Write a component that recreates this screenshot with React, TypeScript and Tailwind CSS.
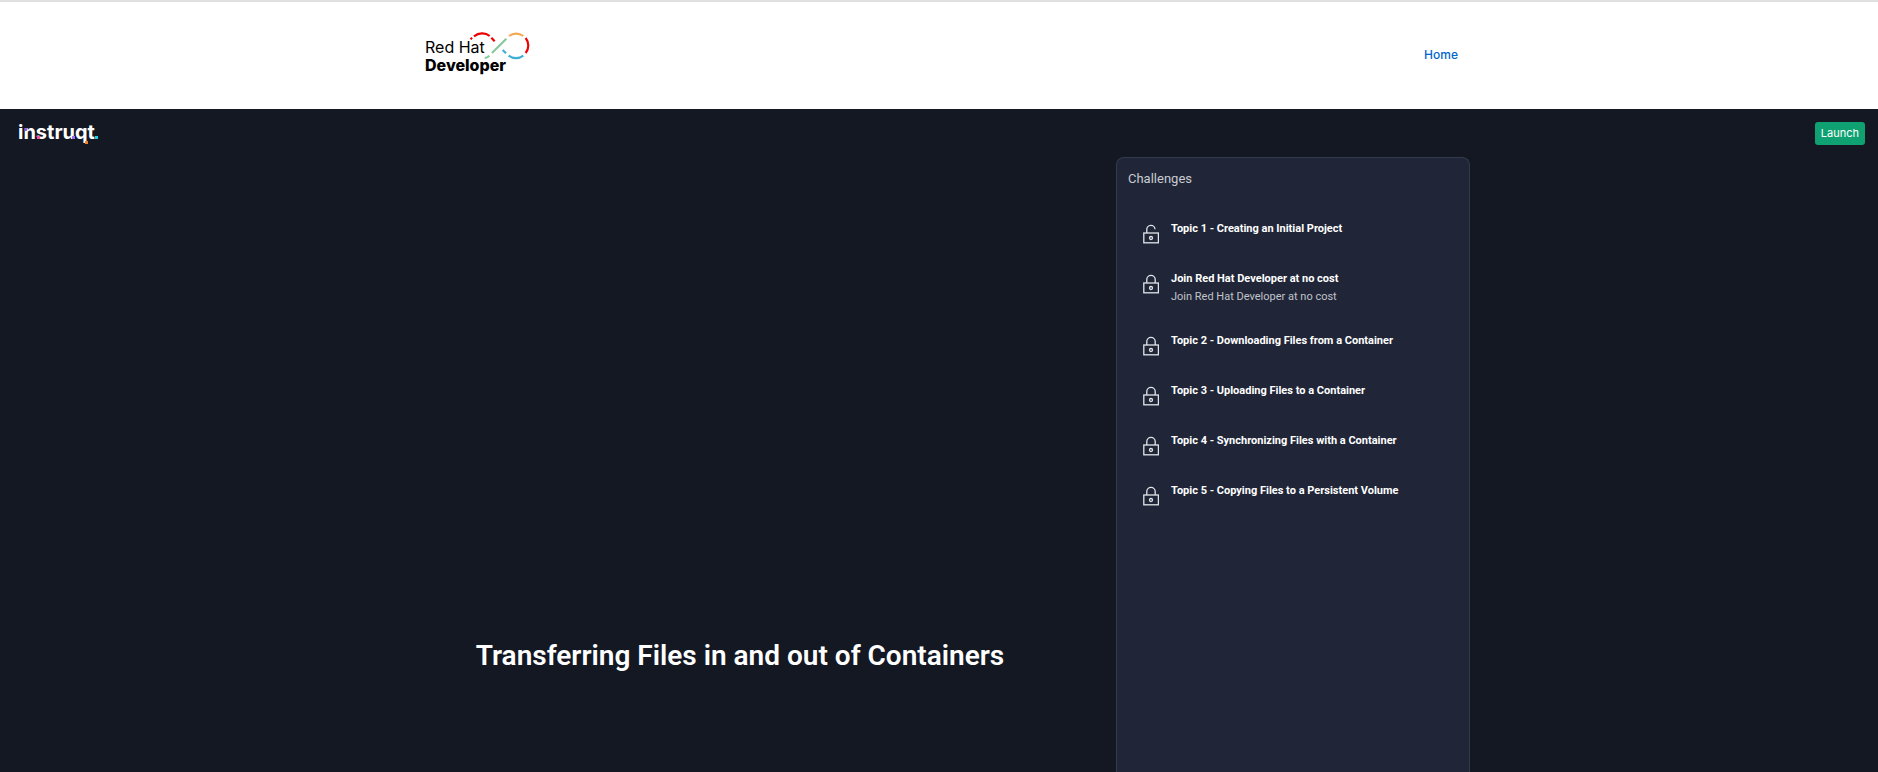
type Challenge = { title: string; description?: string; unlocked?: boolean };

const challenges: Challenge[] = [
  { title: "Topic 1 - Creating an Initial Project", unlocked: true },
  { title: "Join Red Hat Developer at no cost", description: "Join Red Hat Developer at no cost" },
  { title: "Topic 2 - Downloading Files from a Container" },
  { title: "Topic 3 - Uploading Files to a Container" },
  { title: "Topic 4 - Synchronizing Files with a Container" },
  { title: "Topic 5 - Copying Files to a Persistent Volume" },
];

function RedHatLogo() {
  return (
    <svg width="106" height="46" viewBox="45 30 318 138" role="img" aria-label="Red Hat Developer">
      <g fill="none" strokeWidth="6.5">
        <path d="M192 46C206 35 226 34 239 45" stroke="#e00" />
        <path d="M182 55L186 50M244 50L254 61" stroke="#e00" />
        <path d="M297 45A36 36 0 0 1 340 45" stroke="#f4a950" />
        <path d="M347 51A36 36 0 0 1 347 96" stroke="#e00" />
        <path d="M340 104A36 36 0 0 1 296 104" stroke="#3fafd4" />
        <path d="M278 87L288 97" stroke="#3fafd4" />
        <path d="M289 53L246 96" stroke="#85c99b" />
        <path d="M224 111Q232 110 238 104" stroke="#85c99b" />
      </g>
      <g fill="#000" fontFamily="Inter, sans-serif">
        <text x="45" y="97" fontSize="48">Red Hat</text>
        <text x="45" y="149" fontSize="48" fontWeight="800">Developer</text>
      </g>
    </svg>
  );
}

function InstruqtLogo() {
  return (
    <svg width="90" height="30" viewBox="0 0 90 30" role="img" aria-label="instruqt">
      <text x="0" y="21" fill="#fff" fontFamily="Inter, sans-serif" fontSize="20" fontWeight="700">
        instruqt
      </text>
      <rect x="7" y="10" width="2" height="3" fill="#9b5cf6" />
      <rect x="19" y="18" width="3" height="3" fill="#ff4fa3" />
      <rect x="54" y="18" width="3" height="3" fill="#a06cf6" />
      <rect x="67" y="23" width="3" height="3" fill="#f58220" />
      <rect x="77" y="18" width="3" height="3" fill="#12d3f0" />
    </svg>
  );
}

function LockIcon({ open }: { open?: boolean }) {
  return (
    <svg
      className="shrink-0"
      width="16"
      height="24"
      viewBox="0 0 16 24"
      fill="none"
      stroke="#e2e4e8"
      strokeWidth="1.3"
      aria-hidden="true"
    >
      <rect x="0.8" y="13" width="14.6" height="9.8" />
      <circle cx="8" cy="18" r="1.5" />
      <path d={open ? "M3.8 13V9.6A4.1 4.1 0 0 1 12 9.3" : "M3.8 13V9.6A4.2 4.2 0 0 1 12.2 9.6V13"} />
    </svg>
  );
}

export default function App() {
  return (
    <div className="flex min-h-screen flex-col bg-[#141823] font-['Roboto',sans-serif]">
      <header className="border-t-2 border-[#e0e0e0] bg-white">
        <div className="mx-auto flex h-[107px] max-w-[1062px] items-center justify-between pr-3 pb-1 pl-[17px]">
          <RedHatLogo />
          <nav>
            <a href="#home" className="font-['Inter',sans-serif] text-xs font-medium text-[#0066cc]">
              Home
            </a>
          </nav>
        </div>
      </header>

      <div className="flex h-12 items-center justify-between pr-[13px] pl-[18px]">
        <InstruqtLogo />
        <button
          type="button"
          className="h-[23px] rounded-[3px] bg-[#10a172] px-[6px] font-['Inter',sans-serif] text-[11px] text-white"
        >
          Launch
        </button>
      </div>

      <main className="mx-auto flex w-full max-w-[1062px] grow">
        <section className="flex w-2/3 flex-col justify-end pr-11 pb-[94px] text-center">
          <h1 className="text-[28px] leading-[44px] font-semibold text-white">
            Transferring Files in and out of Containers
          </h1>
        </section>

        <aside className="w-1/3 rounded-t-lg border border-b-0 border-[#323a4c] bg-[#202638] px-[11px] pt-[11px]">
          <h2 className="text-[13px] leading-5 text-[#c9cbd0]">Challenges</h2>
          <ul className="pt-[18px]">
            {challenges.map((c) => (
              <li key={c.title} className="flex gap-3 px-[15px] py-[13px]">
                <LockIcon open={c.unlocked} />
                <div className="text-[11px] leading-[18px]">
                  <h3 className="font-bold text-white">{c.title}</h3>
                  {c.description && <p className="text-[#c0c3c9]">{c.description}</p>}
                </div>
              </li>
            ))}
          </ul>
        </aside>
      </main>
    </div>
  );
}
